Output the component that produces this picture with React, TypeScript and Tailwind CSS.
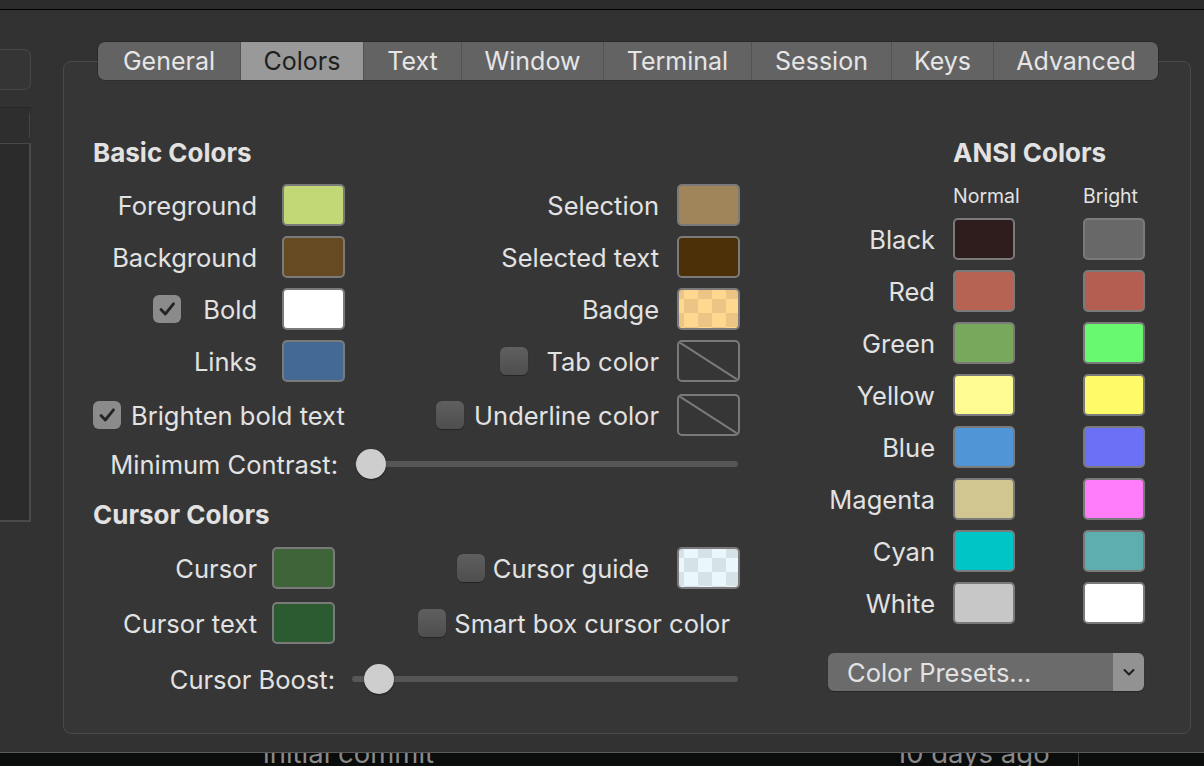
import React from "react";

const tabs = [
  { name: "General", w: "w-[142px]" },
  { name: "Colors", w: "w-[123px]", active: true },
  { name: "Text", w: "w-[98px]" },
  { name: "Window", w: "w-[142px]" },
  { name: "Terminal", w: "w-[148px]" },
  { name: "Session", w: "w-[140px]" },
  { name: "Keys", w: "w-[102px]" },
  { name: "Advanced", w: "w-[165px]" },
];

const ansi: { label: string; normal: string; bright: string }[] = [
  { label: "Black", normal: "bg-[#2f1d1e]", bright: "bg-[#686868]" },
  { label: "Red", normal: "bg-[#b66354]", bright: "bg-[#b45e51]" },
  { label: "Green", normal: "bg-[#77a85c]", bright: "bg-[#69f971]" },
  { label: "Yellow", normal: "bg-[#fefb92]", bright: "bg-[#fffa68]" },
  { label: "Blue", normal: "bg-[#5095d5]", bright: "bg-[#6a71f7]" },
  { label: "Magenta", normal: "bg-[#d1c690]", bright: "bg-[#ff7df8]" },
  { label: "Cyan", normal: "bg-[#00c5c7]", bright: "bg-[#5faeaf]" },
  { label: "White", normal: "bg-[#c7c7c7]", bright: "bg-[#ffffff]" },
];

const Swatch = ({ color, w = "w-[63px]" }: { color: string; w?: string }) => (
  <div className={`${w} h-[42px] shrink-0 rounded-[5px] border-2 border-[#7a7a7a] ${color}`} />
);

const EmptySwatch = () => (
  <div className="w-[63px] h-[42px] shrink-0 rounded-[5px] border-2 border-[#7a7a7a] overflow-hidden">
    <svg viewBox="0 0 59 38" preserveAspectRatio="none" className="w-full h-full">
      <line x1="0" y1="0" x2="59" y2="38" stroke="#7a7a7a" strokeWidth="2" />
    </svg>
  </div>
);

function Checkbox({ checked }: { checked?: boolean }) {
  if (checked) {
    return (
      <div className="w-[28px] h-[28px] shrink-0 rounded-[6px] bg-[#8b8b8b] flex items-center justify-center">
        <svg viewBox="0 0 28 28" className="w-[28px] h-[28px]">
          <path
            d="M8 14.5L12.3 19L20.5 8.8"
            fill="none"
            stroke="#242424"
            strokeWidth="2.8"
            strokeLinecap="round"
            strokeLinejoin="round"
          />
        </svg>
      </div>
    );
  }
  return (
    <div className="w-[28px] h-[28px] shrink-0 rounded-[6px] bg-linear-to-b from-[#5f5f5f] to-[#4e4e4e] shadow-[0_1px_1px_rgba(0,0,0,0.35)]" />
  );
}

export default function App() {
  return (
    <div className="w-[1204px] h-[766px] overflow-hidden bg-[#323232] flex flex-col text-[#e2e2e2] text-[25.5px] font-['Inter',sans-serif]">
      {/* title strip */}
      <div className="h-[10px] shrink-0 bg-[#2c2c2c] border-b border-black" />

      <div className="flex-1 flex min-h-0">
        {/* left sidebar peeking in */}
        <div className="w-[31px] shrink-0 flex flex-col">
          <div className="mt-[39px] h-[41px] rounded-r-[7px] border border-l-0 border-[#474747] bg-[#353535]" />
          <div className="mt-[17px] h-[37px] bg-[#2e2e2e] border-t border-[#262626] border-b border-b-[#474747] flex justify-end items-center pr-[1px]">
            <div className="w-[1px] h-[25px] bg-[#474747]" />
          </div>
          <div className="h-[378px] bg-[#2a2a2a] border-r-2 border-b-2 border-[#4a4a4a]" />
        </div>

        {/* preferences pane */}
        <div className="ml-[32px] w-[1128px] flex flex-col pt-[32px]">
          <div className="relative z-10 ml-[35px] w-[1060px] h-[38px] flex rounded-[7px] overflow-hidden bg-[#636363] text-[25px] shadow-[0_0_0_1px_rgba(0,0,0,0.15)]">
            {tabs.map((t, i) => (
              <div
                key={t.name}
                className={`${t.w} h-full flex items-center justify-center pt-[2px] ${
                  t.active ? "bg-[#999999] text-[#1f1f1f]" : "text-[#e6e6e6]"
                } ${i > 0 ? "border-l border-[#535353]" : ""}`}
              >
                {t.name}
              </div>
            ))}
          </div>

          <div className="-mt-[19px] h-[673px] rounded-[8px] border border-[#4a4a4a] bg-[#363636] flex pl-[29px] pt-[76px]">
            {/* basic + cursor colors */}
            <div className="w-[647px] flex flex-col">
              <div className="h-[30px] leading-[30px] font-bold text-[26px]">Basic Colors</div>

              <div className="mt-[11px] h-[52px] flex">
                <div className="w-[252px] flex items-center justify-end gap-[25px]">
                  <span className="pt-[3px]">Foreground</span>
                  <Swatch color="bg-[#c2d877]" />
                </div>
                <div className="w-[395px] flex items-center justify-end gap-[18px]">
                  <span className="pt-[3px]">Selection</span>
                  <Swatch color="bg-[#a0855a]" />
                </div>
              </div>

              <div className="h-[52px] flex">
                <div className="w-[252px] flex items-center justify-end gap-[25px]">
                  <span className="pt-[3px]">Background</span>
                  <Swatch color="bg-[#664a22]" />
                </div>
                <div className="w-[395px] flex items-center justify-end gap-[18px]">
                  <span className="pt-[3px]">Selected text</span>
                  <Swatch color="bg-[#4b3008]" />
                </div>
              </div>

              <div className="h-[52px] flex">
                <div className="w-[252px] flex items-center justify-end gap-[25px]">
                  <div className="flex items-center gap-[22px]">
                    <Checkbox checked />
                    <span className="pt-[3px]">Bold</span>
                  </div>
                  <Swatch color="bg-white" />
                </div>
                <div className="w-[395px] flex items-center justify-end gap-[18px]">
                  <span className="pt-[3px]">Badge</span>
                  <Swatch color="bg-[conic-gradient(#ecc586_25%,#ffd890_0_50%,#ecc586_0_75%,#ffd890_0)] bg-size-[28px_28px] bg-position-[5px_-5px]" />
                </div>
              </div>

              <div className="h-[52px] flex">
                <div className="w-[252px] flex items-center justify-end gap-[25px]">
                  <span className="pt-[3px]">Links</span>
                  <Swatch color="bg-[#436a94]" />
                </div>
                <div className="w-[395px] flex items-center justify-end gap-[18px]">
                  <div className="flex items-center gap-[18px]">
                    <Checkbox />
                    <span className="pt-[3px]">Tab color</span>
                  </div>
                  <EmptySwatch />
                </div>
              </div>

              <div className="mt-[2px] h-[52px] flex">
                <div className="w-[252px] flex items-center gap-[10px]">
                  <Checkbox checked />
                  <span className="pt-[3px] whitespace-nowrap">Brighten bold text</span>
                </div>
                <div className="w-[395px] flex items-center justify-end gap-[18px]">
                  <div className="flex items-center gap-[10px]">
                    <Checkbox />
                    <span className="pt-[3px]">Underline color</span>
                  </div>
                  <EmptySwatch />
                </div>
              </div>

              <div className="h-[46px] flex items-center">
                <div className="w-[245px] text-right pt-[2px] whitespace-nowrap">Minimum Contrast:</div>
                <div className="ml-[17px] relative w-[385px] h-[30px]">
                  <div className="absolute left-0 right-[2px] top-[12px] h-[6px] rounded-full bg-[#565656]" />
                  <div className="absolute left-[1px] top-0 w-[30px] h-[30px] rounded-full bg-[#cecece] shadow-[0_1px_2px_rgba(0,0,0,0.4)]" />
                </div>
              </div>

              <div className="mt-[13px] h-[30px] leading-[30px] font-bold text-[26px]">Cursor Colors</div>

              <div className="mt-[12px] h-[52px] flex">
                <div className="w-[242px] flex items-center justify-end gap-[15px]">
                  <span className="pt-[3px]">Cursor</span>
                  <Swatch color="bg-[#40643a]" />
                </div>
                <div className="w-[405px] flex items-center justify-end gap-[28px]">
                  <div className="flex items-center gap-[8px]">
                    <Checkbox />
                    <span className="pt-[3px]">Cursor guide</span>
                  </div>
                  <Swatch color="bg-[conic-gradient(#d5e2e6_25%,#eaf7fc_0_50%,#d5e2e6_0_75%,#eaf7fc_0)] bg-size-[28px_28px] bg-position-[5px_-5px]" />
                </div>
              </div>

              <div className="mt-[3px] h-[52px] flex">
                <div className="w-[242px] flex items-center justify-end gap-[15px]">
                  <span className="pt-[3px]">Cursor text</span>
                  <Swatch color="bg-[#2c5a31]" />
                </div>
                <div className="w-[405px] flex items-center justify-end pr-[10px]">
                  <div className="flex items-center gap-[8px]">
                    <Checkbox />
                    <span className="pt-[3px] whitespace-nowrap">Smart box cursor color</span>
                  </div>
                </div>
              </div>

              <div className="mt-[7px] h-[46px] flex items-center">
                <div className="w-[242px] text-right pt-[2px]">Cursor Boost:</div>
                <div className="ml-[17px] relative w-[388px] h-[30px]">
                  <div className="absolute left-0 right-[2px] top-[12px] h-[6px] rounded-full bg-[#565656]" />
                  <div className="absolute left-[12px] top-0 w-[30px] h-[30px] rounded-full bg-[#cecece] shadow-[0_1px_2px_rgba(0,0,0,0.4)]" />
                </div>
              </div>
            </div>

            {/* ANSI colors */}
            <div className="ml-[88px] w-[317px] flex flex-col">
              <div className="h-[30px] leading-[30px] font-bold text-[26px] pl-[125px] whitespace-nowrap">ANSI Colors</div>
              <div className="mt-[17px] h-[24px] flex items-center text-[19.5px]">
                <span className="ml-[125px] w-[130px]">Normal</span>
                <span>Bright</span>
              </div>
              <div className="mt-[4px] flex flex-col">
                {ansi.map((a) => (
                  <div key={a.label} className="h-[52px] flex items-center">
                    <span className="w-[107px] text-right pt-[3px]">{a.label}</span>
                    <div className="ml-[18px]">
                      <Swatch color={a.normal} w="w-[62px]" />
                    </div>
                    <div className="ml-[68px]">
                      <Swatch color={a.bright} w="w-[62px]" />
                    </div>
                  </div>
                ))}
              </div>
              <div className="mt-[24px] w-[316px] h-[38px] rounded-[6px] overflow-hidden flex shadow-[0_1px_1px_rgba(0,0,0,0.3)]">
                <div className="flex-1 bg-[#6b6b6b] pl-[19px] pt-[2px] flex items-center">Color Presets...</div>
                <div className="w-[31px] bg-[#929292] flex items-center justify-center">
                  <svg viewBox="0 0 16 16" className="w-[16px] h-[16px]">
                    <path d="M3.5 6L8 10.5L12.5 6" fill="none" stroke="#1e1e1e" strokeWidth="2" strokeLinecap="round" strokeLinejoin="round" />
                  </svg>
                </div>
              </div>
            </div>
          </div>
        </div>
      </div>

      {/* underlying window, mostly hidden */}
      <div className="h-[1px] shrink-0 bg-[#5b5b5b]" />
      <div className="h-[13px] shrink-0 bg-[#0b0c0c] flex overflow-hidden text-[27.5px] leading-[28px] text-[#8a8a8a]">
        <span className="ml-[263px] -mt-[14px] w-[632px] whitespace-nowrap">initial commit</span>
        <span className="-mt-[14px] w-[183px] whitespace-nowrap">10 days ago</span>
        <div className="w-[1px] h-full bg-[#3a3a3a]" />
      </div>
    </div>
  );
}
